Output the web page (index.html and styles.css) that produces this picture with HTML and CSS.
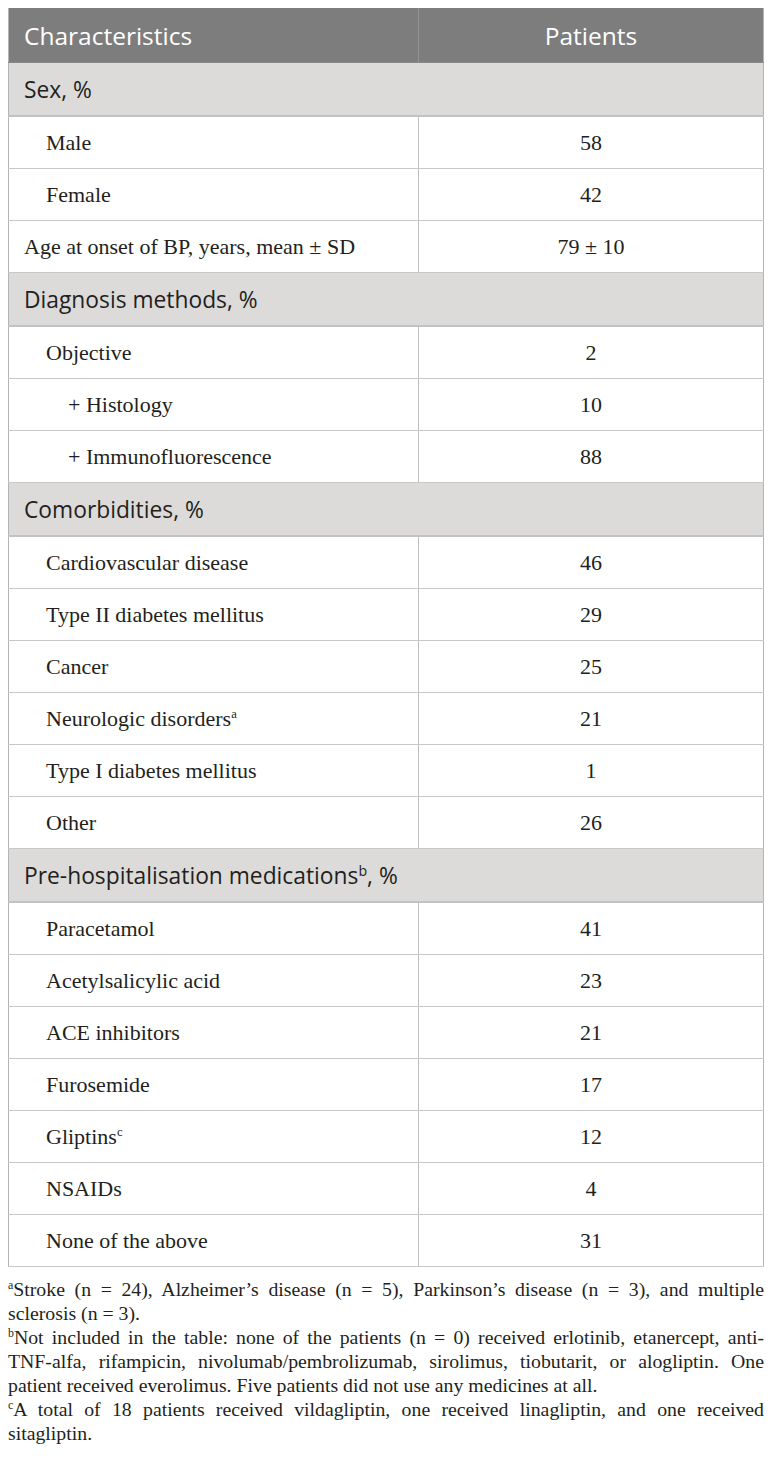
FILE: index.html
```html
<!DOCTYPE html>
<html lang="en">
<head>
  <meta charset="UTF-8">
  <meta name="viewport" content="width=device-width, initial-scale=1.0">
  <title>Patient characteristics</title>
  <link rel="stylesheet" href="styles.css">
</head>
<body>
  <table class="data-table">
    <colgroup>
      <col class="col-a">
      <col class="col-b">
    </colgroup>
    <thead>
      <tr class="head-row">
        <th class="col-label">Characteristics</th>
        <th class="col-value">Patients</th>
      </tr>
    </thead>
    <tbody>
      <tr class="group-row"><td colspan="2">Sex, %</td></tr>
      <tr><td class="lvl-1">Male</td><td class="val">58</td></tr>
      <tr><td class="lvl-1">Female</td><td class="val">42</td></tr>
      <tr><td class="lvl-0">Age at onset of BP, years, mean ± SD</td><td class="val">79 ± 10</td></tr>

      <tr class="group-row"><td colspan="2">Diagnosis methods, %</td></tr>
      <tr><td class="lvl-1">Objective</td><td class="val">2</td></tr>
      <tr><td class="lvl-2">+ Histology</td><td class="val">10</td></tr>
      <tr><td class="lvl-2">+ Immunofluorescence</td><td class="val">88</td></tr>

      <tr class="group-row"><td colspan="2">Comorbidities, %</td></tr>
      <tr><td class="lvl-1">Cardiovascular disease</td><td class="val">46</td></tr>
      <tr><td class="lvl-1">Type II diabetes mellitus</td><td class="val">29</td></tr>
      <tr><td class="lvl-1">Cancer</td><td class="val">25</td></tr>
      <tr><td class="lvl-1">Neurologic disorders<sup>a</sup></td><td class="val">21</td></tr>
      <tr><td class="lvl-1">Type I diabetes mellitus</td><td class="val">1</td></tr>
      <tr><td class="lvl-1">Other</td><td class="val">26</td></tr>

      <tr class="group-row"><td colspan="2">Pre-hospitalisation medications<sup>b</sup>, %</td></tr>
      <tr><td class="lvl-1">Paracetamol</td><td class="val">41</td></tr>
      <tr><td class="lvl-1">Acetylsalicylic acid</td><td class="val">23</td></tr>
      <tr><td class="lvl-1">ACE inhibitors</td><td class="val">21</td></tr>
      <tr><td class="lvl-1">Furosemide</td><td class="val">17</td></tr>
      <tr><td class="lvl-1">Gliptins<sup>c</sup></td><td class="val">12</td></tr>
      <tr><td class="lvl-1">NSAIDs</td><td class="val">4</td></tr>
      <tr><td class="lvl-1">None of the above</td><td class="val">31</td></tr>
    </tbody>
  </table>

  <div class="notes">
    <p>
      <span class="line"><sup>a</sup>Stroke (n = 24), Alzheimer’s disease (n = 5), Parkinson’s disease (n = 3), and multiple</span>
      <span class="line last">sclerosis (n = 3).</span>
    </p>
    <p>
      <span class="line"><sup>b</sup>Not included in the table: none of the patients (n = 0) received erlotinib, etanercept, anti-</span>
      <span class="line">TNF-alfa, rifampicin, nivolumab/pembrolizumab, sirolimus, tiobutarit, or alogliptin. One</span>
      <span class="line last">patient received everolimus. Five patients did not use any medicines at all.</span>
    </p>
    <p>
      <span class="line"><sup>c</sup>A total of 18 patients received vildagliptin, one received linagliptin, and one received</span>
      <span class="line last">sitagliptin.</span>
    </p>
  </div>
</body>
</html>
```

FILE: styles.css
```css
body {
  margin: 8px;
  background: #fff;
  color: #231f20;
  font-family: "Liberation Serif", "Times New Roman", serif;
}

.data-table {
  width: 756px;
  table-layout: fixed;
  border-collapse: collapse;
  border-left: 1px solid #b4b4b4;
  border-right: 1px solid #b4b4b4;
}

.col-a { width: 410px; }

.data-table th,
.data-table td {
  padding: 0;
  border-bottom: 1px solid #c8c8c8;
  vertical-align: middle;
}

/* header */
.head-row th {
  height: 54px;
  background: #7d7d7d;
  color: #fff;
  font-family: "Open Sans", "Liberation Sans", sans-serif;
  font-weight: 400;
  font-size: 24.5px;
  border-bottom: 1px solid #8a8a8a;
}

.head-row .col-label {
  text-align: left;
  padding-left: 15px;
  border-right: 1px solid #949494;
}

.head-row .col-value {
  text-align: center;
}

/* section rows */
.data-table .group-row td {
  height: 52px;
  background: #dcdbda;
  font-family: "Open Sans", "Liberation Sans", sans-serif;
  font-size: 22.8px;
  color: #231f20;
  padding-left: 15px;
  border-bottom: 2px solid #c2c2c2;
}

/* data rows */
.data-table tbody td {
  height: 51px;
  font-size: 22px;
}

.data-table td.val {
  text-align: center;
  border-left: 1px solid #c0c0c0;
}

.data-table .lvl-0 { padding-left: 15px; }
.data-table .lvl-1 { padding-left: 37px; }
.data-table .lvl-2 { padding-left: 59px; }

sup {
  font-size: 0.58em;
  line-height: 0;
  vertical-align: 0.6em;
}

.group-row sup {
  font-size: 0.62em;
}

/* footnotes */
.notes {
  width: 756px;
  margin-top: 10px;
  font-size: 19.8px;
  line-height: 24px;
  color: #231f20;
}

.notes p {
  margin: 0;
}

.notes .line {
  display: block;
  text-align: justify;
  text-align-last: justify;
  white-space: nowrap;
}

.notes .line.last {
  text-align-last: left;
}

.notes sup {
  font-size: 0.6em;
  vertical-align: 0.55em;
}
```
